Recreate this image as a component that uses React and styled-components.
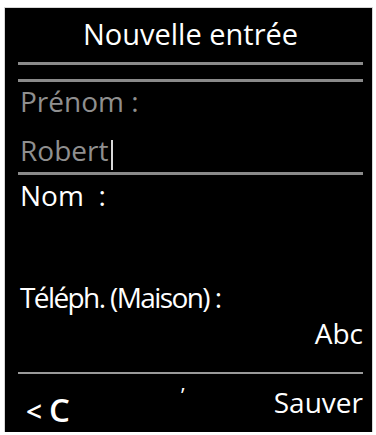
import React from 'react'
import styled, { createGlobalStyle } from 'styled-components'

const Global = createGlobalStyle`
body {
  margin: 0;
  background: #fff;
}
`

const Screen = styled.div`
width: 367px;
height: 424px;
margin: 8px 0 0 5px;
padding: 0 9px 0 13px;
box-sizing: border-box;
background: #000;
box-shadow: 0 0 0 1px #d6d6d6;
display: flex;
flex-direction: column;
font-family: "Open Sans", "Noto Sans", sans-serif;
color: #fff;
`
const Title = styled.h1`
margin: 0;
height: 54px;
line-height: 52px;
font-size: 29px;
font-weight: 400;
text-align: center;
`
const DoubleRule = styled.div`
display: flex;
flex-direction: column;
gap: 14px;
`
const Rule = styled.div`
height: ${p => (p.$thin ? 2 : 3)}px;
background: ${p => (p.$thin ? '#9a9a9a' : '#8a8a8a')};
`
const Field = styled.div`
display: flex;
flex-direction: column;
border-bottom: ${p => (p.$active ? '3px solid #8a8a8a' : 'none')};
`
const Line = styled.div`
height: ${p => p.$h}px;
padding: ${p => p.$pt || 0}px 0 0 2px;
box-sizing: border-box;
line-height: ${p => p.$h - (p.$pt || 0)}px;
font-size: 28px;
letter-spacing: ${p => (p.$tight ? '-1.6px' : 'normal')};
color: ${p => (p.$dim ? '#8f8f8f' : '#fff')};
text-align: ${p => (p.$right ? 'right' : 'left')};
white-space: nowrap;
`
const Caret = styled.span`
display: inline-block;
width: 2px;
height: 30px;
margin-left: 3px;
vertical-align: -9px;
background: #d8d8d8;
`
const Spacer = styled.div`
flex: 1;
`
const SoftKeys = styled.div`
height: 58px;
display: flex;
justify-content: space-between;
align-items: flex-end;
`
const BackKey = styled.div`
display: flex;
align-items: baseline;
gap: 7px;
padding-left: 8px;
margin-bottom: 6px;
line-height: 1;
`
const Chevron = styled.span`
font-size: 28px;
font-weight: 600;
`
const Clear = styled.span`
font-size: 33px;
font-weight: 600;
`
const Tick = styled.span`
align-self: flex-start;
margin: 11px 0 0 22px;
font-size: 20px;
line-height: 1;
`
const KeyLabel = styled.span`
font-size: 28px;
line-height: 1;
margin-bottom: 16px;
`

export default function App() {
    return (
        <>
            <Global />
            <Screen>
                <Title>Nouvelle entrée</Title>
                <DoubleRule>
                    <Rule />
                    <Rule />
                </DoubleRule>
                <Field $active>
                    <Line $dim $h={39}>Prénom :</Line>
                    <Line $dim $h={51} $pt={7}>Robert<Caret /></Line>
                </Field>
                <Field>
                    <Line $h={40}>Nom&nbsp;&nbsp;:</Line>
                    <Line $h={60} />
                </Field>
                <Field>
                    <Line $h={44} $tight>Téléph. (Maison) :</Line>
                    <Line $h={28} $right>Abc</Line>
                </Field>
                <Spacer />
                <Rule $thin />
                <SoftKeys>
                    <BackKey>
                        <Chevron>&lt;</Chevron>
                        <Clear>C</Clear>
                    </BackKey>
                    <Tick>ʹ</Tick>
                    <KeyLabel>Sauver</KeyLabel>
                </SoftKeys>
            </Screen>
        </>
    )
}
